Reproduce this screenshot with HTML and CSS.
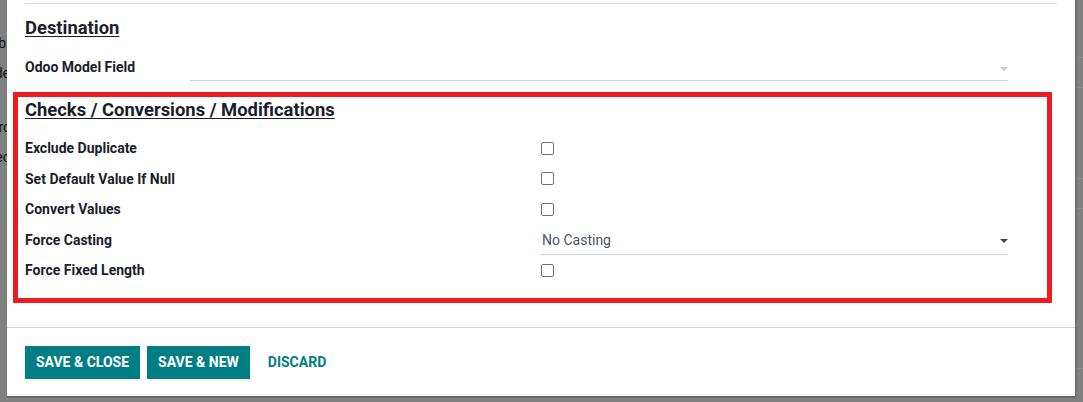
FILE: index.html
```html
<!DOCTYPE html>
<html>
<head>
<meta charset="utf-8">
<link rel="stylesheet" href="styles.css">
</head>
<body>
<div class="page">
  <div class="backdrop-left">
    <div class="frag frag-1"><span>b</span></div>
    <div class="frag frag-2"><span>de</span></div>
    <div class="frag frag-3"><span>ro</span></div>
    <div class="frag frag-4"><span>ec</span></div>
  </div>
  <div class="modal">
    <div class="modal-body">
      <div class="sep-top"></div>
      <h3 class="sec-title">Destination</h3>
      <div class="dest-row">
        <label class="lbl dest-lbl">Odoo Model Field</label>
        <div class="select dest-select"><span class="select-value"></span><i class="caret caret-light"></i></div>
      </div>
      <section class="highlight">
        <h3 class="sec-title sec-checks">Checks / Conversions / Modifications</h3>
        <div class="form-grid">
          <label class="lbl">Exclude Duplicate</label>
          <div class="cell"><span class="checkbox"></span></div>
          <label class="lbl">Set Default Value If Null</label>
          <div class="cell"><span class="checkbox"></span></div>
          <label class="lbl">Convert Values</label>
          <div class="cell"><span class="checkbox"></span></div>
          <label class="lbl">Force Casting</label>
          <div class="cell"><div class="select cast-select"><span class="select-value">No Casting</span><i class="caret caret-dark"></i></div></div>
          <label class="lbl">Force Fixed Length</label>
          <div class="cell"><span class="checkbox"></span></div>
        </div>
      </section>
    </div>
    <div class="modal-footer">
      <button class="btn btn-primary">Save &amp; Close</button>
      <button class="btn btn-primary">Save &amp; New</button>
      <button class="btn btn-link">Discard</button>
    </div>
  </div>
  <div class="backdrop-right">
    <div class="bg-line bl-1"></div>
    <div class="bg-line bl-2"></div>
    <div class="bg-line bl-3"></div>
    <div class="bg-line bl-4"></div>
    <div class="bg-line bl-5"></div>
  </div>
</div>
</body>
</html>
```

FILE: styles.css
```css
* { box-sizing: border-box; }
html, body { margin: 0; padding: 0; }
body {
  font-family: Roboto, "Liberation Sans", sans-serif;
  background: #808080;
  color: #212529;
}
.page {
  display: flex;
  width: 1083px;
  height: 402px;
  overflow: hidden;
  background: #808080;
}

/* backdrop fragments */
.backdrop-left {
  width: 7px;
  flex: none;
  overflow: hidden;
  padding-top: 34px;
}
.frag {
  display: flex;
  justify-content: flex-end;
  width: 7px;
  height: 18px;
  font-size: 14px;
  line-height: 18px;
  color: #111214;
  white-space: nowrap;
}
.frag-1 span { margin-right: 1px; }
.frag-2 span { margin-right: -3px; }
.frag-3 span { margin-right: -4px; }
.frag-4 span { margin-right: -3px; }
.frag-2 { margin-top: 12px; }
.frag-3 { margin-top: 36px; }
.frag-4 { margin-top: 12px; }

.backdrop-right {
  flex: 1;
  border-left: 2px solid #727272;
  height: 398px;
  display: flex;
  flex-direction: column;
}
.bg-line { height: 1px; background: #8c8c8c; }
.bl-1 { margin-top: 57px; }
.bl-2 { margin-top: 29px; }
.bl-3 { margin-top: 90px; }
.bl-4 { margin-top: 29px; }
.bl-5 { margin-top: 159px; }

/* modal */
.modal {
  width: 1068px;
  height: 396px;
  flex: none;
  background: #fff;
  display: flex;
  flex-direction: column;
  box-shadow: 0 2px 0 #6a6a6a;
}
.modal-body {
  padding: 3px 18px 24px 18px;
}
.sep-top {
  height: 1px;
  background: #dee2e6;
}
.sec-title {
  margin: 12px 0 0 0;
  font-size: 18.4px;
  line-height: 24px;
  font-weight: 700;
  text-decoration: underline;
  text-underline-offset: 2px;
  text-decoration-thickness: 1px;
  color: #1b1d2b;
}
.lbl {
  font-size: 14px;
  font-weight: 700;
  color: #1b1d2b;
  line-height: 30.5px;
}
.dest-row {
  display: flex;
  align-items: flex-start;
  margin-top: 13px;
  height: 28px;
}
.dest-lbl {
  width: 165px;
  line-height: 28px;
}
.select {
  position: relative;
  display: flex;
  align-items: center;
  border-bottom: 1px solid #d0d0d0;
  font-size: 14px;
  color: #4a5466;
}
.dest-select {
  width: 818px;
  height: 28px;
}
.caret {
  position: absolute;
  right: 0;
  width: 0;
  height: 0;
  border-left: 4px solid transparent;
  border-right: 4px solid transparent;
  border-top: 4px solid #c8c8c8;
}
.dest-select .caret { top: 14px; }
.caret-dark { border-top-color: #3f4450; top: 14px; }

/* highlight box */
.highlight {
  margin: 11px 5px 0 -12px;
  border: 5px solid #ed1c24;
  padding: 0 0 12px 7px;
}
.sec-checks {
  margin-top: 0;
  line-height: 25px;
}
.form-grid {
  margin-top: 11px;
  display: grid;
  grid-template-columns: 516px 467px;
  grid-auto-rows: 30.5px;
}
.cell {
  display: flex;
  align-items: center;
}
.checkbox {
  width: 13px;
  height: 13px;
  border: 1px solid #6f7378;
  border-radius: 2px;
  background: #fff;
}
.cast-select {
  width: 467px;
  height: 30px;
  padding-left: 1px;
  padding-top: 1px;
}

/* footer */
.modal-footer {
  border-top: 1px solid #d4d4d8;
  padding: 18px 18px 17px 18px;
  display: flex;
  gap: 7px;
}
.btn {
  height: 33px;
  padding: 0 11px;
  border: none;
  font-family: Roboto, "Liberation Sans", sans-serif;
  font-size: 14px;
  font-weight: 700;
  text-transform: uppercase;
  cursor: pointer;
}
.btn-primary {
  background: #017e84;
  color: #fff;
}
.btn-link {
  background: transparent;
  color: #017e84;
  margin-left: 0;
}
```
